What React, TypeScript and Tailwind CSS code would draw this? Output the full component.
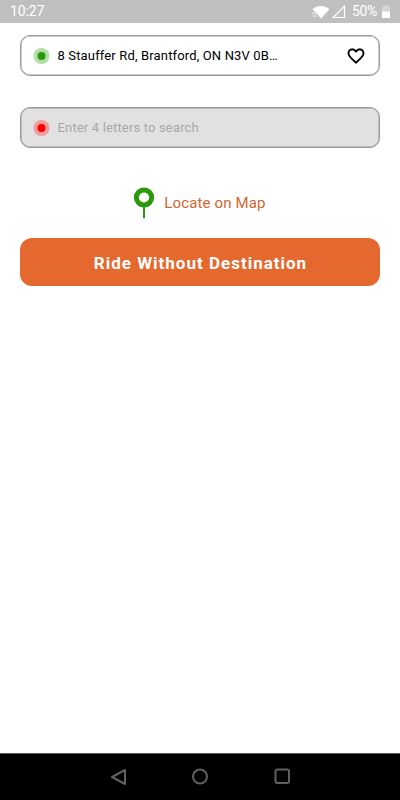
import React from "react";

function StatusBar() {
  return (
    <header className="flex h-[23px] shrink-0 items-center bg-[#bfbfbf] pl-[10px] pr-[10px] text-white">
      <span className="text-[14px] leading-[23px] tracking-[-0.1px]">10:27</span>
      <div className="ml-auto flex items-center">
        <svg width="18" height="14" viewBox="0 0 18 14" fill="currentColor">
          <path d="M.5 4.200C5.500-.2 12.500-.2 17.300 4.200L9 13.500 5.200 9.200V7.400H3.300Z" />
          <path d="M.3 7.800h1.200v1.100H.3zM2.300 7.800h2v1.100h-2zM.3 10.500h1.200v1.100H.3zM2.300 10.500h2v1.100h-2z" />
        </svg>
        <svg className="ml-[2px]" width="14" height="14" viewBox="0 0 14 14" fill="none" stroke="currentColor" strokeWidth="1.2">
          <path d="M1.200 12.500H12.500V1.200Z" />
        </svg>
        <span className="ml-[6px] text-[14px] leading-[23px] tracking-[-0.35px]">50%</span>
        <svg className="ml-[5px]" width="8" height="13" viewBox="0 0 8 13" fill="currentColor">
          <path d="M2 0h4v1.500h2V7H0V1.500h2Z" opacity=".35" />
          <path d="M0 6.500h8V13H0z" />
        </svg>
      </div>
    </header>
  );
}

function Dot({ halo, core }: { halo: string; core: string }) {
  return (
    <svg className="shrink-0" width="17" height="16" viewBox="0 0 17 16">
      <circle className={halo} cx="8.500" cy="8" r="8" />
      <circle className={core} cx="8.500" cy="8" r="4" />
    </svg>
  );
}

export default function App() {
  return (
    <div className="flex h-[800px] w-[400px] flex-col bg-white font-['Roboto',sans-serif]">
      <StatusBar />
      <main className="flex flex-1 flex-col px-5 pt-3">
        <div className="flex h-[41px] items-center rounded-[10px] border border-[#999] pl-3 pr-[13px] shadow-[inset_0_0_0_0.5px_#999]">
          <Dot halo="fill-[#b5dda8]" core="fill-[#2c9908]" />
          <span className="ml-[7.5px] whitespace-nowrap text-[13px] tracking-[0.15px] text-black">8 Stauffer Rd, Brantford, ON N3V 0B…</span>
          <svg className="ml-auto" width="20" height="20" viewBox="0 0 24 24" fill="#000" stroke="#000" strokeWidth=".2">
            <path d="M16.500 3c-1.740 0-3.410.81-4.500 2.090C10.910 3.810 9.240 3 7.500 3 4.420 3 2 5.420 2 8.500c0 3.780 3.400 6.860 8.550 11.540L12 21.350l1.450-1.320C18.600 15.360 22 12.280 22 8.500 22 5.420 19.580 3 16.500 3zm-4.400 15.550-.1.100-.1-.1C7.140 14.240 4 11.390 4 8.500 4 6.500 5.500 5 7.500 5c1.540 0 3.040.99 3.570 2.360h1.870C13.460 5.990 14.960 5 16.500 5c2 0 3.500 1.500 3.500 3.500 0 2.890-3.140 5.740-7.900 10.050z" />
          </svg>
        </div>
        <div className="mt-[31px] flex h-[41px] items-center rounded-[10px] border border-[#999] bg-[#e1e1e1] pl-3 shadow-[inset_0_0_0_0.5px_#999]">
          <Dot halo="fill-[#f39c9c]" core="fill-[#f80000]" />
          <span className="ml-[7.5px] whitespace-nowrap text-[13px] tracking-[0.16px] text-[#a8a8a8]">Enter 4 letters to search</span>
        </div>
        <div className="mt-[38px] flex h-[34px] items-center justify-center pr-px">
          <svg width="22" height="34" viewBox="0 0 22 34" fill="none" stroke="#2c9908">
            <circle cx="11" cy="11.500" r="7.600" strokeWidth="5" />
            <path d="M11 19v13.200" strokeWidth="2" />
          </svg>
          <span className="ml-[9px] text-[15px] tracking-[0.14px] text-[#d2662f]">Locate on Map</span>
        </div>
        <button className="mt-[18px] h-12 rounded-[12px] bg-[#e5692e] pl-px pt-[3px] text-[17px] font-bold tracking-[1px] text-white">
          Ride Without Destination
        </button>
      </main>
      <nav className="flex h-[47px] shrink-0 items-center justify-center gap-[65px] border-t border-[#555] bg-black pb-px text-[#606060]">
        <svg width="17" height="18" viewBox="0 0 17 18" fill="none" stroke="currentColor" strokeWidth="2" strokeLinejoin="round">
          <path d="M2 9 15 2v14Z" />
        </svg>
        <svg width="17" height="17" viewBox="0 0 17 17" fill="none" stroke="currentColor" strokeWidth="2">
          <circle cx="8" cy="8.500" r="7" />
        </svg>
        <svg width="17" height="17" viewBox="0 0 17 17" fill="none" stroke="currentColor" strokeWidth="2">
          <rect x="1.500" y="1.500" width="13.500" height="13.500" rx="2" />
        </svg>
      </nav>
    </div>
  );
}
